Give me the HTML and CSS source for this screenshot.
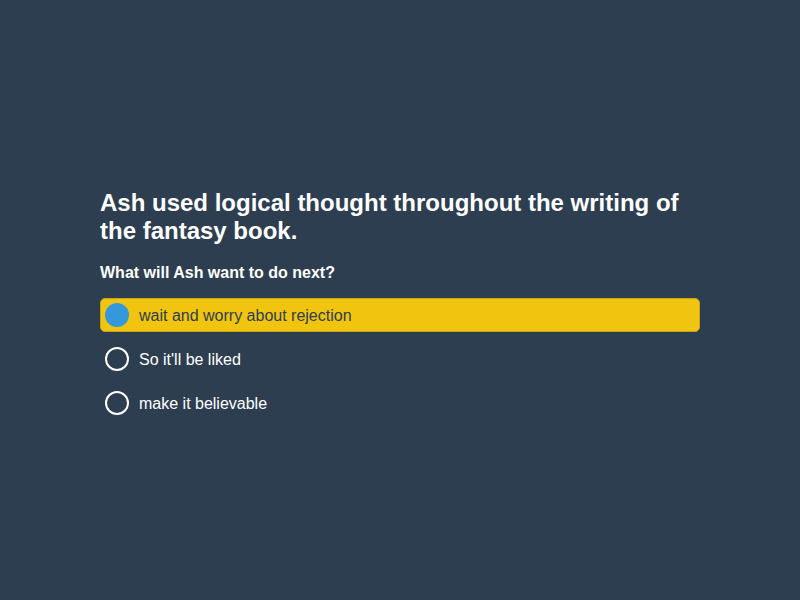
FILE: index.html
```html
<!DOCTYPE html>
<html>
<head>
<meta charset="utf-8">
<link rel="stylesheet" href="styles.css">
</head>
<body>
<main class="quiz">
  <h1 class="prompt">Ash used logical thought throughout the writing of the fantasy book.</h1>
  <h2 class="question">What will Ash want to do next?</h2>
  <ul class="options">
    <li class="option selected"><span class="radio"></span><span class="label">wait and worry about rejection</span></li>
    <li class="option"><span class="radio"></span><span class="label">So it'll be liked</span></li>
    <li class="option"><span class="radio"></span><span class="label">make it believable</span></li>
  </ul>
</main>
</body>
</html>
```
FILE: styles.css
```css
html, body {
  margin: 0;
  padding: 0;
  height: 100%;
  background: #2d3e50;
  font-family: "Liberation Sans", Arial, sans-serif;
  color: #ffffff;
}
.quiz {
  width: 600px;
  margin: 0 auto;
  padding-top: 189px;
}
.prompt {
  margin: 0;
  font-size: 24px;
  line-height: 28px;
  font-weight: bold;
}
.question {
  margin: 19px 0 0;
  font-size: 16px;
  line-height: 18px;
  font-weight: bold;
}
.options {
  list-style: none;
  margin: 16px 0 0;
  padding: 0;
  display: flex;
  flex-direction: column;
  gap: 10px;
}
.option {
  display: flex;
  align-items: center;
  gap: 10px;
  height: 34px;
  box-sizing: border-box;
  padding: 0 4px;
  border: 1px solid transparent;
  border-radius: 5px;
  font-size: 16px;
}
.option.selected {
  background: #f1c40f;
  border-color: #c9a516;
  color: #2d3e50;
}
.label {
  padding-top: 2px;
}
.radio {
  width: 24px;
  height: 24px;
  box-sizing: border-box;
  border: 2px solid #ffffff;
  border-radius: 50%;
  flex: none;
}
.option.selected .radio {
  border: none;
  background: #3498db;
}
```
